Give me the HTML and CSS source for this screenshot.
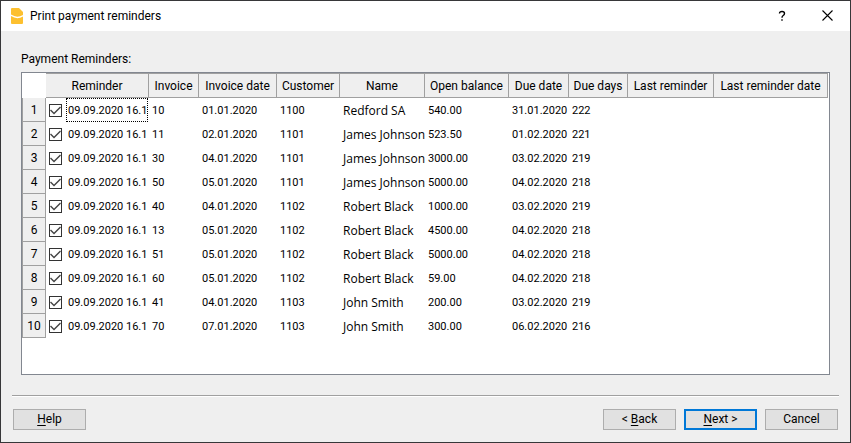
FILE: index.html
```html
<!DOCTYPE html>
<html lang="en">
<head>
<meta charset="utf-8">
<title>Print payment reminders</title>
<link rel="stylesheet" href="styles.css">
</head>
<body>
<div class="window">
  <header class="titlebar">
    <svg class="logo" width="12" height="16" viewBox="0 0 12 16" aria-hidden="true">
      <path fill="#fdc02f" d="M0 1Q0 0 1 0H8L12 4V7Q6 10.500 0 6.500Z"/>
      <path fill="#fdc02f" d="M0 8Q6 12 12 8.500V15Q12 16 11 16H1Q0 16 0 15Z"/>
    </svg>
    <h1 class="title">Print payment reminders</h1>
    <button class="caption" type="button" aria-label="Help">
      <svg width="10" height="12" viewBox="0 0 10 12"><path d="M1.500 3.500Q1.500 1.500 4 1.500T6.500 3.500Q6.500 4.700 5.200 5.500T4 7.800M4 9.200V10.800" fill="none" stroke="#000" stroke-width="1.400"/></svg>
    </button>
    <button class="caption" type="button" aria-label="Close">
      <svg width="12" height="12" viewBox="0 0 12 12"><path d="M0.500 0.500L10.500 10.500M10.500 0.500L0.500 10.500" stroke="#000" stroke-width="1.100"/></svg>
    </button>
  </header>
  <main class="content">
    <h2 class="label" id="list-label">Payment Reminders:</h2>
    <div class="list">
      <table class="grid" aria-labelledby="list-label">
        <colgroup>
          <col class="c-num"><col class="c-reminder"><col class="c-invoice"><col class="c-invdate"><col class="c-customer"><col class="c-name"><col class="c-balance"><col class="c-duedate"><col class="c-days"><col class="c-last"><col class="c-lastdate">
        </colgroup>
        <thead>
          <tr><td class="corner"></td><th class="first">Reminder</th><th>Invoice</th><th>Invoice date</th><th>Customer</th><th>Name</th><th>Open balance</th><th>Due date</th><th>Due days</th><th>Last reminder</th><th>Last reminder date</th></tr>
        </thead>
        <tbody>
          <tr><th>1</th><td class="check"><label><input type="checkbox" checked><span class="stamp focused">09.09.2020 16.1</span></label></td><td>10</td><td>01.01.2020</td><td>1100</td><td class="name">Redford SA</td><td>540.00</td><td>31.01.2020</td><td>222</td><td></td><td></td></tr>
          <tr><th>2</th><td class="check"><label><input type="checkbox" checked><span class="stamp">09.09.2020 16.1</span></label></td><td>11</td><td>02.01.2020</td><td>1101</td><td class="name">James Johnson</td><td>523.50</td><td>01.02.2020</td><td>221</td><td></td><td></td></tr>
          <tr><th>3</th><td class="check"><label><input type="checkbox" checked><span class="stamp">09.09.2020 16.1</span></label></td><td>30</td><td>04.01.2020</td><td>1101</td><td class="name">James Johnson</td><td>3000.00</td><td>03.02.2020</td><td>219</td><td></td><td></td></tr>
          <tr><th>4</th><td class="check"><label><input type="checkbox" checked><span class="stamp">09.09.2020 16.1</span></label></td><td>50</td><td>05.01.2020</td><td>1101</td><td class="name">James Johnson</td><td>5000.00</td><td>04.02.2020</td><td>218</td><td></td><td></td></tr>
          <tr><th>5</th><td class="check"><label><input type="checkbox" checked><span class="stamp">09.09.2020 16.1</span></label></td><td>40</td><td>04.01.2020</td><td>1102</td><td class="name">Robert Black</td><td>1000.00</td><td>03.02.2020</td><td>219</td><td></td><td></td></tr>
          <tr><th>6</th><td class="check"><label><input type="checkbox" checked><span class="stamp">09.09.2020 16.1</span></label></td><td>13</td><td>05.01.2020</td><td>1102</td><td class="name">Robert Black</td><td>4500.00</td><td>04.02.2020</td><td>218</td><td></td><td></td></tr>
          <tr><th>7</th><td class="check"><label><input type="checkbox" checked><span class="stamp">09.09.2020 16.1</span></label></td><td>51</td><td>05.01.2020</td><td>1102</td><td class="name">Robert Black</td><td>5000.00</td><td>04.02.2020</td><td>218</td><td></td><td></td></tr>
          <tr><th>8</th><td class="check"><label><input type="checkbox" checked><span class="stamp">09.09.2020 16.1</span></label></td><td>60</td><td>05.01.2020</td><td>1102</td><td class="name">Robert Black</td><td>59.00</td><td>04.02.2020</td><td>218</td><td></td><td></td></tr>
          <tr><th>9</th><td class="check"><label><input type="checkbox" checked><span class="stamp">09.09.2020 16.1</span></label></td><td>41</td><td>04.01.2020</td><td>1103</td><td class="name">John Smith</td><td>200.00</td><td>03.02.2020</td><td>219</td><td></td><td></td></tr>
          <tr><th>10</th><td class="check"><label><input type="checkbox" checked><span class="stamp">09.09.2020 16.1</span></label></td><td>70</td><td>07.01.2020</td><td>1103</td><td class="name">John Smith</td><td>300.00</td><td>06.02.2020</td><td>216</td><td></td><td></td></tr>
        </tbody>
      </table>
    </div>
  </main>
  <footer class="actions">
    <button class="btn" type="button"><u>H</u>elp</button>
    <span class="spacer"></span>
    <button class="btn" type="button">&lt; <u>B</u>ack</button>
    <button class="btn primary" type="button"><u>N</u>ext &gt;</button>
    <button class="btn" type="button">Cancel</button>
  </footer>
</div>
</body>
</html>
```
FILE: styles.css
```css
* { box-sizing: border-box; }

body {
  margin: 0;
  font: 12px/16px Roboto, "Open Sans", sans-serif;
  color: #000;
}

button {
  font: inherit;
  color: inherit;
  padding: 0;
}

.window {
  display: flex;
  flex-direction: column;
  min-height: 100vh;
  background: #efefef;
  border: 1px solid #373739;
}

.titlebar {
  display: flex;
  align-items: center;
  height: 30px;
  padding-left: 10px;
  background: #fff;
}

.title {
  flex: 1;
  margin: 0 0 0 7px;
  font-size: 12px;
  font-weight: 400;
}

.caption {
  display: flex;
  align-items: center;
  justify-content: center;
  width: 45px;
  height: 30px;
  border: 0;
  background: transparent;
}

.content {
  flex: 1;
  display: flex;
  flex-direction: column;
  padding: 20px 20px;
}

.label {
  margin: 0 0 5px;
  font-size: 12px;
  font-weight: 400;
}

.list {
  flex: 1;
  overflow: hidden;
  background: #fff;
  border: 1px solid #828790;
}

.grid {
  table-layout: fixed;
  width: 806px;
  border-collapse: separate;
  border-spacing: 0;
}

.c-num { width: 24px; }
.c-reminder { width: 103px; }
.c-invoice { width: 50px; }
.c-invdate { width: 78px; }
.c-customer { width: 63px; }
.c-name { width: 85px; }
.c-balance { width: 84px; }
.c-duedate { width: 60px; }
.c-days { width: 59px; }
.c-last { width: 86px; }
.c-lastdate { width: 114px; }

.grid th {
  padding: 0;
  font-weight: 400;
  text-align: center;
  white-space: nowrap;
  background: #efefef;
  border: solid #a0a0a0;
}

.grid thead th {
  height: 25px;
  border-width: 1px 1px 1px 0;
}

.grid tbody th {
  height: 24px;
  border-width: 0 1px 1px;
}

.grid td {
  padding: 2px 0 0 3px;
  font-size: 11px;
  white-space: nowrap;
}

.grid .name {
  font-family: "Open Sans", sans-serif;
  font-size: 12px;
}

.grid .check { padding: 0; }

.check label {
  display: flex;
  align-items: center;
  height: 24px;
  padding: 0 1px 0 3px;
}

.check input {
  appearance: none;
  width: 13px;
  height: 13px;
  margin: 0 4px 0 0;
  border: 1px solid #333;
  background: #fff;
}

.check input:checked::before {
  content: "";
  display: block;
  width: 11px;
  height: 11px;
  background: #444;
  clip-path: polygon(0 6px, 1px 5px, 4px 8px, 10px 2px, 11px 3px, 4px 10px);
}

.stamp {
  flex: 1;
  height: 24px;
  padding-left: 1px;
  line-height: 24px;
  border: 1px solid transparent;
  overflow: hidden;
}

.stamp.focused { border: 1px dotted #000; }

.actions {
  display: flex;
  gap: 8px;
  margin: 0 11px;
  padding: 13px 1px 12px;
  border-top: 1px solid #a0a0a0;
  box-shadow: inset 0 1px #fff;
}

.spacer { flex: 1; }

.btn {
  width: 73px;
  height: 21px;
  line-height: 17px;
  border: 1px solid #adadad;
  background: #e1e1e1;
}

.btn.primary { border: 2px solid #0078d7; }
.btn u { text-underline-offset: 2px; }
```
